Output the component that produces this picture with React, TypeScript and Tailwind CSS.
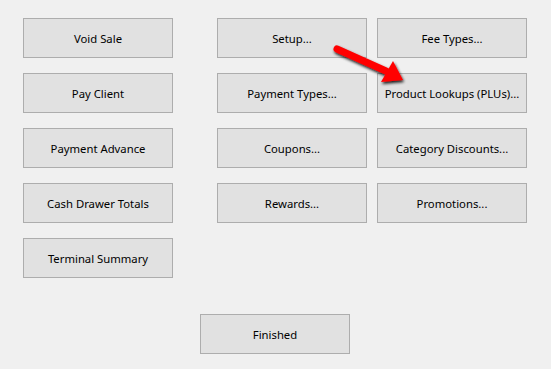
import React from "react";

const Btn = ({ label }: { label: string }) => (
  <button className="w-[150px] h-[40px] bg-[#e1e1e1] border border-[#adadad] text-[11.3px] text-[#000] flex items-center justify-center leading-none pt-[2px]">
    {label}
  </button>
);

export default function App() {
  return (
    <div
      className="relative w-[551px] h-[369px] bg-[#f0f0f0] overflow-hidden"
      style={{ fontFamily: '"Noto Sans", "Open Sans", sans-serif' }}
    >
      <div className="flex pl-[23px] pt-[18px]">
        <div className="flex flex-col gap-[15px]">
          <Btn label="Void Sale" />
          <Btn label="Pay Client" />
          <Btn label="Payment Advance" />
          <Btn label="Cash Drawer Totals" />
          <Btn label="Terminal Summary" />
        </div>
        <div className="flex flex-col gap-[15px] ml-[44px]">
          <Btn label="Setup..." />
          <Btn label="Payment Types..." />
          <Btn label="Coupons..." />
          <Btn label="Rewards..." />
        </div>
        <div className="flex flex-col gap-[15px] ml-[10px]">
          <Btn label="Fee Types..." />
          <Btn label="Product Lookups (PLUs)..." />
          <Btn label="Category Discounts..." />
          <Btn label="Promotions..." />
        </div>
      </div>
      <div className="pl-[200px] pt-[36px]">
        <Btn label="Finished" />
      </div>
      <svg
        className="absolute left-0 top-0 pointer-events-none"
        width="551"
        height="369"
        viewBox="0 0 551 369"
      >
        <defs>
          <filter id="sh" x="-20%" y="-40%" width="140%" height="180%">
            <feGaussianBlur in="SourceAlpha" stdDeviation="1.6" />
            <feOffset dx="1" dy="1.5" result="b" />
            <feComponentTransfer>
              <feFuncA type="linear" slope="0.9" />
            </feComponentTransfer>
            <feMerge>
              <feMergeNode />
              <feMergeNode in="SourceGraphic" />
            </feMerge>
          </filter>
        </defs>
        <g filter="url(#sh)">
          <line x1="337" y1="49" x2="386" y2="71" stroke="#ff0000" strokeWidth="7" strokeLinecap="round" />
          <polygon points="403,80 381,82 393,61" fill="#ff0000" />
        </g>
      </svg>
    </div>
  );
}
